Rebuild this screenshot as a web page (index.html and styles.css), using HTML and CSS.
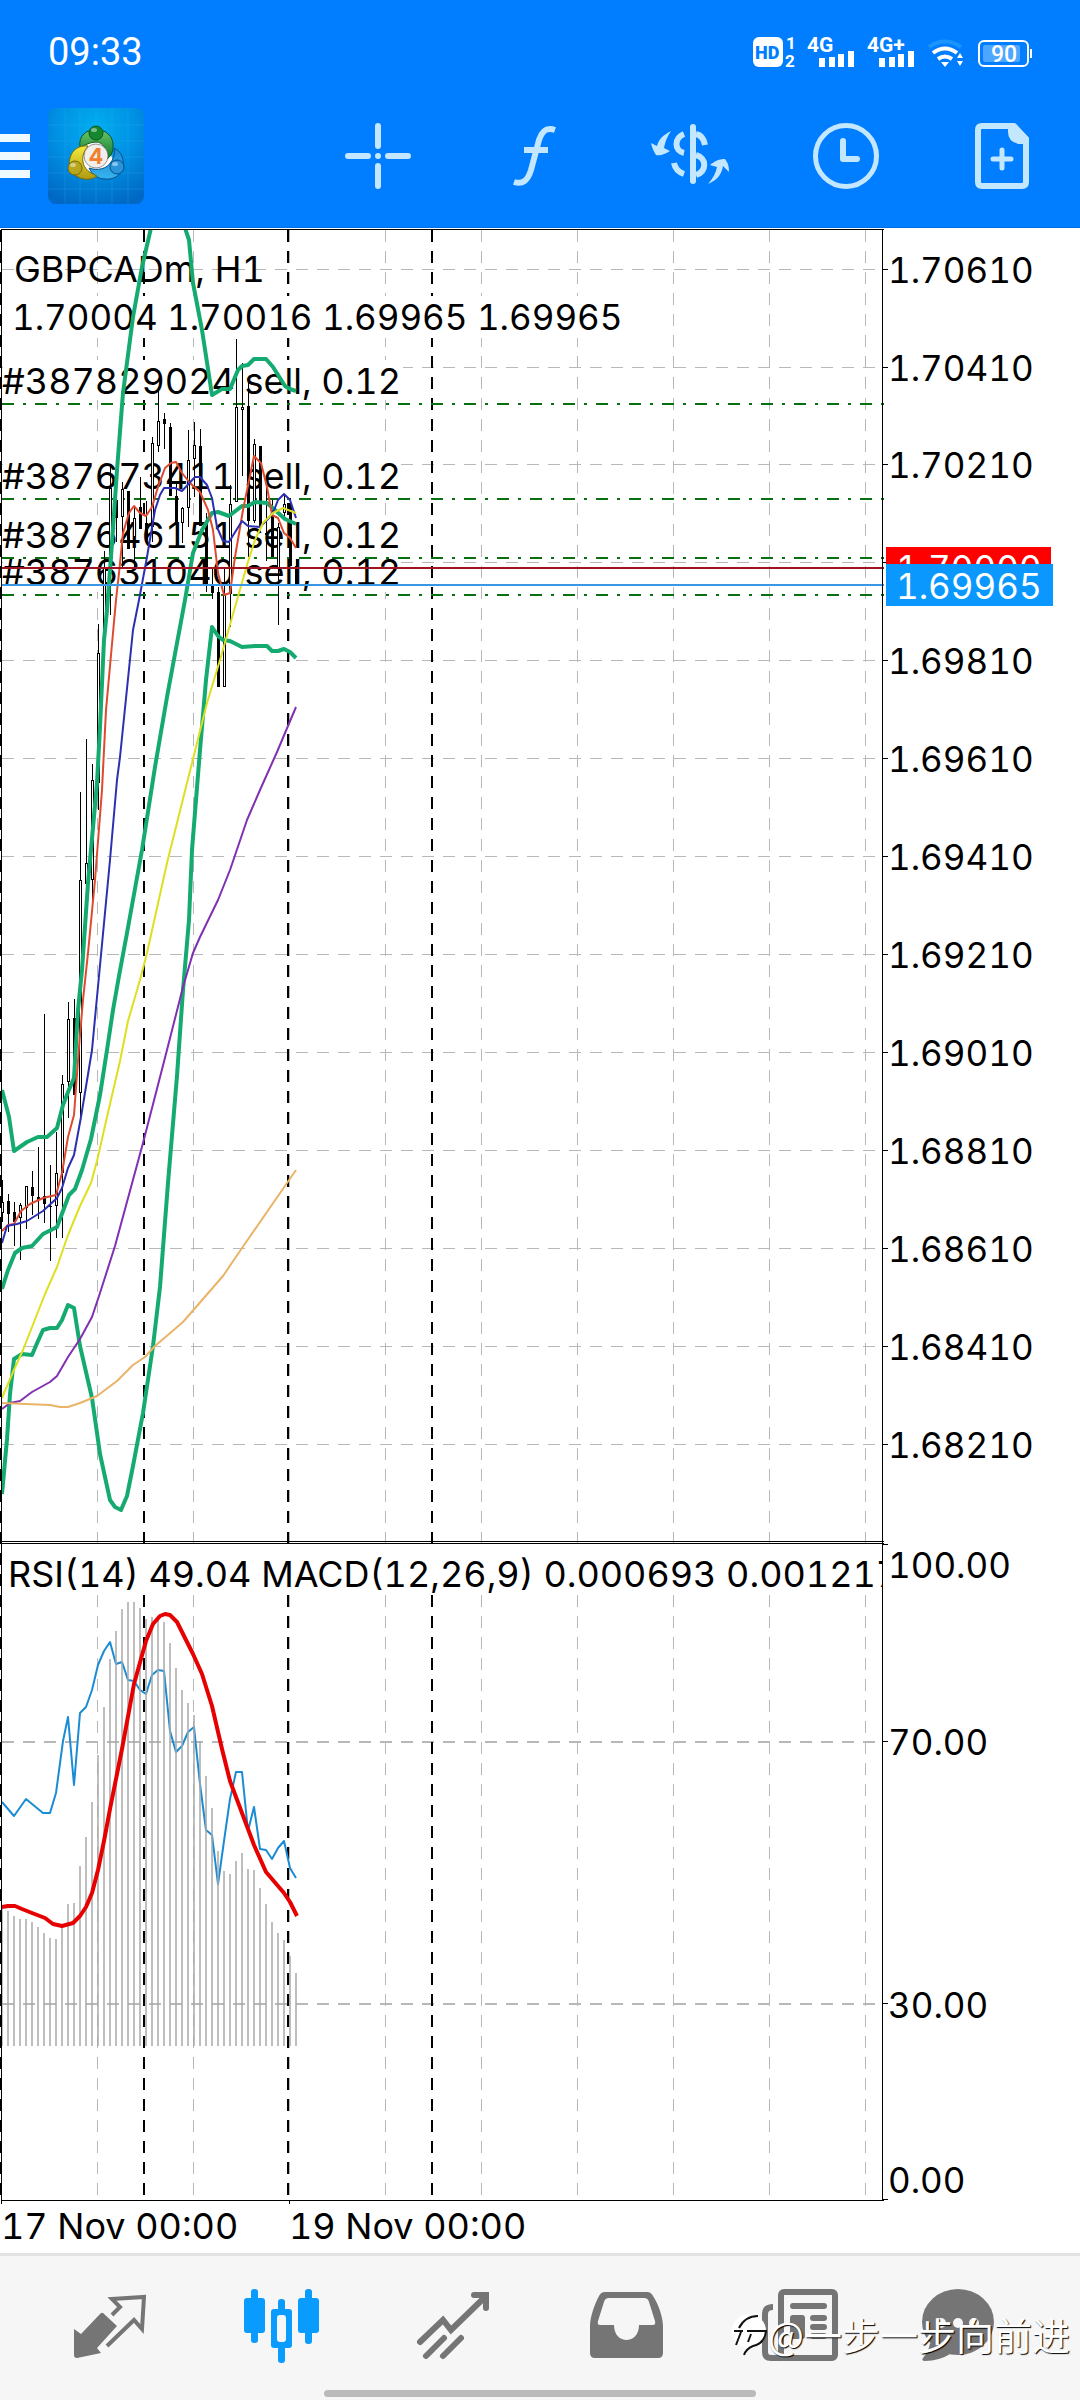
FILE: index.html
```html
<!DOCTYPE html>
<html lang="en">
<head>
<meta charset="utf-8">
<meta name="viewport" content="width=device-width, initial-scale=1">
<title>GBPCADm, H1</title>
<link rel="stylesheet" href="styles.css">
</head>
<body>
<header class="header">
  <div class="status">
    <span class="status-time">09:33</span>
    <div class="status-icons">
      <svg width="282" height="36" viewBox="750 33 282 36" aria-hidden="true">
        <rect x="753" y="36" width="30" height="30" rx="6" fill="#fff"/>
        <text x="755" y="58" class="st-hd">HD</text>
        <text x="786" y="48" class="st-tiny">1</text>
        <text x="785" y="66" class="st-tiny">2</text>
        <text x="807" y="51" class="st-net">4G</text>
        <path fill="#fff" d="M819 57h6v9h-6zM829 56h6v10h-6zM838 53h6v13h-6zM848 50h6v16h-6z"/>
        <text x="867" y="51" class="st-net">4G+</text>
        <path fill="#fff" d="M879 57h6v9h-6zM889 56h6v10h-6zM898 53h6v13h-6zM908 50h6v16h-6z"/>
        <g fill="none" stroke="#fff" stroke-width="4">
          <path stroke="#1a95ff" d="M929 46q16-11 32 0"/>
          <path d="M933 52q12-9 24 0"/>
          <path d="M938 58q7-5 14 0"/>
        </g>
        <path fill="#fff" d="M941 61h8l-4 5zM957 57l3-5 3 5zM957 60h6l-3 5z"/>
        <rect x="979" y="40" width="49" height="25" rx="5" fill="none" stroke="#fff" stroke-width="2"/>
        <rect x="983" y="44" width="37" height="17" rx="2" fill="#4da6ff"/>
        <path fill="#fff" d="M1030 48h2v9h-2z"/>
        <text x="991" y="61" class="st-bat">90</text>
      </svg>
    </div>
  </div>
  <div class="toolbar">
    <button class="menu" aria-label="Menu"><span></span><span></span><span></span></button>
    <svg class="logo" width="96" height="96" viewBox="0 0 96 96" role="img" aria-label="MetaTrader 4">
      <defs>
        <radialGradient id="lg" cx=".5" cy=".2" r=".85"><stop offset="0" stop-color="#00aeef"/><stop offset=".5" stop-color="#0090e4"/><stop offset="1" stop-color="#0068c4"/></radialGradient>
        <linearGradient id="gg" x2="0" y2="1"><stop offset="0" stop-color="#6cc46a"/><stop offset="1" stop-color="#0b7a2c"/></linearGradient>
        <linearGradient id="yg" x2="0" y2="1"><stop offset="0" stop-color="#f4ea3c"/><stop offset="1" stop-color="#b09a10"/></linearGradient>
        <linearGradient id="bg" x2="0" y2="1"><stop offset="0" stop-color="#1a86d0"/><stop offset="1" stop-color="#36b4ee"/></linearGradient>
      </defs>
      <rect width="96" height="96" rx="8" fill="url(#lg)"/>
      <path stroke="#3cb4f0" stroke-opacity=".25" d="M17 0v96M32 0v96M48 0v96M64 0v96M80 0v96M0 17h96M0 33h96M0 49h96M0 65h96M0 81h96"/>
      <path fill="#fff" d="M38 34h20l10 26-20 6-20-6z"/>
      <g stroke-width="1">
        <path fill="url(#gg)" stroke="#075a1e" d="M32 39C30 28 39 21 48 22c9-1 18 6 17 17 0 6-3 10-6 12 0-10-4-17-11-17-6 0-10 3-16 5z"/>
        <path fill="url(#bg)" stroke="#064f8c" d="M66 40c8 4 10 11 9 19-2 9-10 13-18 12-8 0-13-5-16-11 8 3 18 1 22-6 3-4 4-8 3-14z"/>
        <path fill="url(#yg)" stroke="#7a6a05" d="M40 38c-9-1-16 4-18 12-3 9 4 20 14 21 6 1 10-1 13-3-7-3-13-7-14-14-1-6 1-11 5-16z"/>
        <circle cx="48" cy="25" r="7" fill="#16862f" stroke="#075a1e"/>
        <circle cx="27" cy="60" r="7" fill="#b8a61c" stroke="#7a6a05"/>
        <circle cx="69" cy="59" r="7" fill="#2a94d8" stroke="#064f8c"/>
      </g>
      <g fill="#fff" fill-opacity=".45"><ellipse cx="46" cy="22" rx="3" ry="2"/><ellipse cx="25" cy="57" rx="3" ry="2"/><ellipse cx="67" cy="56" rx="3" ry="2"/></g>
      <circle cx="48" cy="48" r="12" fill="#f1eeec" stroke="#555" stroke-width=".6"/>
      <text x="48" y="56" class="logo-num">4</text>
    </svg>
    <nav class="tools">
      <button aria-label="Crosshair"><svg width="84" height="84" viewBox="336 114 84 84"><g stroke="#c3e7ff" stroke-width="6" stroke-linecap="round"><path d="M378 126v20M378 166v20M348 156h20M388 156h20"/></g><circle cx="378" cy="156" r="3" fill="#c3e7ff"/></svg></button>
      <button aria-label="Indicators"><svg width="84" height="84" viewBox="492 114 84 84"><path fill="none" stroke="#c3e7ff" stroke-width="6" d="M514 182c9 3 14-2 17-12l8-30c3-9 7-13 16-10M524 150h24"/></svg></button>
      <button aria-label="Trade"><svg width="84" height="84" viewBox="648 114 84 84"><g fill="none" stroke="#c3e7ff" stroke-width="6"><path stroke-linecap="round" d="M693 127v54"/><path d="M684 134c-10 4-10 17 0 19M674 163c1 5 4 9 10 11M696 134c5 1 8 5 9 11M696 155c11 3 11 16 0 20"/></g><path fill="#c3e7ff" d="M671 131c-9 5-12 8-14 15l-6-3c1 5 3 9 5 12 5 1 9-1 14-4l-6-3c1-6 3-11 7-17zM708 184c10-4 14-11 15-18l6 6c0-6-1-9-4-13-6 0-10 2-15 6l7 2c-1 6-4 11-9 17z"/></svg></button>
      <button aria-label="Timeframe"><svg width="84" height="84" viewBox="804 114 84 84"><g fill="none" stroke="#c3e7ff"><circle cx="846" cy="156" r="30.500" stroke-width="5"/><path stroke-width="6" stroke-linecap="round" stroke-linejoin="round" d="M843 141v18h14"/></g></svg></button>
      <button aria-label="New order"><svg width="84" height="84" viewBox="960 114 84 84"><path fill="none" stroke="#c3e7ff" stroke-width="6" stroke-linejoin="round" d="M982 126h32l12 13v43q0 4-4 4h-40q-4 0-4-4v-52q0-4 4-4z"/><path fill="#c3e7ff" d="M1008 124h7l14 14v6h-10q-11-2-11-12z"/><path stroke="#c3e7ff" stroke-width="5" stroke-linecap="round" d="M1002 150v18M993 159h18"/></svg></button>
    </nav>
  </div>
</header>

<main class="chart">
<svg class="plot" viewBox="0 228 1080 2025" role="img" aria-label="GBPCADm hourly price chart with RSI and MACD">
  <defs>
    <clipPath id="panes"><path d="M1 229h881v1972H1z"/></clipPath>
  </defs>

  <g class="grid">
    <path class="gv" d="M97.500 230V2200M193.500 230V2200M289.500 230V2200M385.500 230V2200M481.500 230V2200M577.500 230V2200M673.500 230V2200M769.500 230V2200M865.500 230V2200"/>
    <path class="gv" d="M2 269.500H882M2 367.500H882M2 464.500H882M2 562.500H882M2 660.500H882M2 758.500H882M2 856.500H882M2 954.500H882M2 1052.500H882M2 1150.500H882M2 1248.500H882M2 1346.500H882M2 1444.500H882"/>
    <path class="gl" d="M2 1742H882M2 2004H882"/>
    <path class="day" d="M0 230V2200M144 230V2200M288 230V2200M432 230V2200"/>
  </g>

  <g fill="#fff">
    <path d="M3 296h616v42H3zM3 360h400v40H3zM3 455h390v40H3zM3 515h392v40H3zM3 551h396v41H3zM3 1545h878v45H3z"/>
  </g>
  <g class="label">
    <text x="14" y="282">GBPCADm, H1</text>
    <text x="12" y="330" class="price">1.70004 1.70016 1.69965 1.69965</text>
    <text x="2" y="394">#387829024 sell, 0.12</text>
    <text x="2" y="489">#387673411 sell, 0.12</text>
    <text x="2" y="548">#387646151 sell, 0.12</text>
    <text x="2" y="585">#387631040 sell, 0.12</text>
    <text x="8" y="1587" clip-path="url(#panes)">RSI(14) 49.04 MACD(12,26,9) 0.000693 0.001217</text>
  </g>

  <path class="order" d="M2 404H884M2 499H884M2 558H884M2 595H884"/>

  <g class="candles">
    <path class="wick" d="M2.500 1180V1222M8.500 1194V1232M14.500 1202V1246M20.500 1203V1260M26.500 1186V1229M32.500 1171V1215M38.500 1147V1219M44.500 1014V1223M50.500 1165V1261M56.500 1132V1238M62.500 1075V1238M68.500 1002V1118M74.500 999V1095M80.500 792V1116M86.500 739V905M92.500 764V901M98.500 624V810M104.500 551V638M110.500 464V615M116.500 483V542M122.500 482V568M134.500 508V568M140.500 477V529M146.500 501V540M152.500 437V542M158.500 387V452M164.500 413V449M170.500 423V496M176.500 483V536M182.500 507V543M188.500 430V527M194.500 422V497M200.500 429V526M206.500 513V592M212.500 567V599M218.500 587V687M224.500 567V687M230.500 485V627M236.500 339V502M242.500 363V476M248.500 377V557M254.500 439V523M266.500 483V561M272.500 500V557M278.500 523V625M284.500 495V517M290.500 498V566M296.500 559V586"/>
    <path class="up" d="M1.500 1202.500h2v10h-2zM19.500 1205.500h2v12h-2zM25.500 1186.500h2v21h-2zM55.500 1173.500h2v32h-2zM61.500 1084.500h2v88h-2zM67.500 1019.500h2v62h-2zM79.500 880.500h2v212h-2zM85.500 863.500h2v20h-2zM91.500 780.500h2v99h-2zM97.500 653.500h2v129h-2zM103.500 567.500h2v69h-2zM109.500 488.500h2v78h-2zM121.500 489.500h2v27h-2zM133.500 518.500h2v18h-2zM151.500 443.500h2v83h-2zM157.500 421.500h2v24h-2zM181.500 508.500h2v14h-2zM187.500 460.500h2v47h-2zM193.500 445.500h2v13h-2zM223.500 595.500h2v91h-2zM229.500 504.500h2v89h-2zM235.500 407.500h2v94h-2zM241.500 407.500h2v2h-2zM253.500 444.500h2v76h-2zM277.500 527.500h2v40h-2zM283.500 504.500h2v8h-2z"/>
    <path class="down" d="M7 1201h3v13h-3zM13 1212h3v10h-3zM31 1187h3v9h-3zM37 1197h3v3h-3zM43 1196h3v8h-3zM49 1206h3v1h-3zM73 1018h3v77h-3zM115 500h3v18h-3zM127 491h3v58h-3zM139 507h3v22h-3zM145 523h3v17h-3zM163 419h3v5h-3zM169 427h3v69h-3zM175 496h3v28h-3zM199 446h3v80h-3zM205 523h3v63h-3zM211 586h3v7h-3zM217 592h3v95h-3zM247 406h3v115h-3zM259 446h3v81h-3zM265 533h3v2h-3zM271 516h3v41h-3zM289 503h3v63h-3zM295 566h3v19h-3z"/>
  </g>

  <g class="curves" clip-path="url(#panes)">
    <g class="band">
      <polyline points="2,1090 9,1117 14,1151 27,1142 38,1137 47,1137 57,1128 63,1105 68,1092 74,1078 78,1010 82,970 88,883 97,783 100,727 104,640 107,610 112,543 117,470 123,393 133,317 142,267 151,228"/>
      <polyline points="185,228 189,240 193,283 202,330 212,395 222,389 230,389 238,370 242,366 248,365 254,359 266,359 273,367 285,386 290,389 296,391"/>
      <polyline points="2,1289 8,1270 15,1253 22,1248 32,1246 43,1234 57,1227 63,1211 69,1195 75,1189 82,1170 91,1139 100,1095 107,1050 113,1010 119,976 127,933 142,850 155,767 167,697 185,600 193,553 202,530 212,513 218,512 229,516 242,506 248,506 255,502 267,503 285,519 296,524"/>
      <polyline points="2,1494 7,1439 10,1394 14,1359 22,1354 32,1355 38,1341 43,1330 50,1328 57,1328 62,1320 68,1305 74,1308 80,1346 92,1398 100,1454 110,1500 115,1507 121,1510 127,1496 133,1466 143,1413 153,1346 160,1287 168,1183 177,1076 183,990 189,920 192,850 200,750 206,680 212,627 218,636 223,640 230,641 242,647 255,646 267,646 272,651 278,651 284,649 290,652 296,658"/>
    </g>
    <polyline stroke="#de4a30" points="2,1231 8,1225 14,1224 21,1211 30,1204 43,1198 56,1195 62,1173 68,1137 74,1115 79,1047 83,1000 88,953 95,880 102,790 106,710 116,600 119,573 123,533 129,513 134,506 140,513 146,516 152,507 158,487 165,468 171,463 176,462 182,473 190,483 200,492 208,510 213,530 218,573 224,595 230,593 235,557 243,510 254,456 261,463 267,487 272,515 278,518 284,533 290,538 296,548"/>
    <polyline stroke="#2c30b0" points="2,1243 7,1226 17,1224 27,1221 43,1211 57,1198 62,1188 68,1168 74,1155 81,1117 92,1050 97,997 110,860 117,780 120,757 133,630 139,600 147,557 155,510 160,495 164,488 175,488 182,491 195,477 200,477 207,485 212,498 217,527 223,541 229,542 242,521 248,526 260,527 267,520 273,513 278,500 284,494 290,500 296,518"/>
    <polyline stroke="#dde020" points="2,1398 13,1372 23,1350 45,1294 57,1267 68,1235 80,1206 91,1183 97,1161 107,1117 120,1061 128,1021 140,980 147,953 167,863 187,783 207,703 220,660 237,600 247,565 255,540 263,523 273,513 283,508 296,513"/>
    <polyline stroke="#8030b0" points="2,1409 10,1403 20,1401 32,1392 50,1382 57,1376 68,1357 80,1339 92,1317 100,1293 115,1246 143,1143 167,1050 183,987 193,953 200,937 218,900 230,870 247,820 260,790 277,752 296,707"/>
    <polyline stroke="#eab468" points="2,1403 50,1405 60,1407 68,1407 80,1403 97,1396 117,1381 133,1365 145,1357 155,1346 183,1322 223,1276 242,1248 296,1170"/>

    <polyline stroke="#1a8cd4" points="2,1802 14,1816 26,1799 43,1813 50,1813 56,1793 63,1741 68,1717 74,1785 80,1713 86,1707 92,1690 98,1665 104,1651 110,1642 116,1664 122,1662 128,1680 134,1681 140,1690 146,1694 152,1675 158,1670 164,1671 170,1731 176,1752 182,1746 188,1732 194,1727 200,1784 206,1830 212,1835 218,1884 224,1841 230,1799 236,1772 242,1772 248,1831 254,1807 260,1849 266,1850 272,1859 278,1848 284,1841 290,1868 296,1878"/>
    <path class="hist" d="M2 1908V2046M8 1911V2046M14 1916V2046M20 1919V2046M26 1919V2046M32 1922V2046M38 1927V2046M44 1933V2046M50 1938V2046M56 1939V2046M62 1927V2046M68 1904V2046M74 1903V2046M80 1866V2046M86 1837V2046M92 1802V2046M98 1755V2046M104 1707V2046M110 1659V2046M116 1631V2046M122 1609V2046M128 1602V2046M134 1602V2046M140 1608V2046M146 1619V2046M152 1617V2046M158 1617V2046M164 1622V2046M170 1643V2046M176 1668V2046M182 1690V2046M188 1703V2046M194 1715V2046M200 1741V2046M206 1776V2046M212 1808V2046M218 1851V2046M224 1871V2046M230 1874V2046M236 1861V2046M242 1853V2046M248 1869V2046M254 1870V2046M260 1888V2046M266 1904V2046M272 1922V2046M278 1933V2046M284 1940V2046M290 1956V2046M296 1973V2046"/>
    <polyline class="signal" points="2,1907 8,1906 15,1906 22,1909 32,1913 45,1918 53,1924 62,1926 73,1923 80,1916 86,1907 92,1893 98,1870 104,1841 110,1809 122,1749 134,1684 146,1641 153,1624 160,1616 165,1614 170,1615 177,1622 193,1654 202,1674 212,1706 222,1749 230,1781 242,1813 254,1845 266,1872 284,1893 290,1902 297,1916"/>
  </g>

  <path stroke="#a01420" stroke-width="2" d="M1 568H884"/>
  <path stroke="#3c96e6" stroke-width="2" d="M1 585H884"/>

  <path class="frame" d="M2 229.500H884M882.500 229V2201M1.500 229V2204M2 1541.500H884M2 1543.500H884M1 2200.500H884M289.500 2200V2204M883 269.500h5M883 367.500h5M883 464.500h5M883 562.500h5M883 660.500h5M883 758.500h5M883 856.500h5M883 954.500h5M883 1052.500h5M883 1150.500h5M883 1248.500h5M883 1346.500h5M883 1444.500h5M883 1544.500h5M883 1741.500h5M883 2003.500h5M883 2199.500h5"/>

  <g class="label price">
    <text x="888" y="283">1.70610</text>
    <text x="888" y="381">1.70410</text>
    <text x="888" y="478">1.70210</text>
    <text x="888" y="674">1.69810</text>
    <text x="888" y="772">1.69610</text>
    <text x="888" y="870">1.69410</text>
    <text x="888" y="968">1.69210</text>
    <text x="888" y="1066">1.69010</text>
    <text x="888" y="1164">1.68810</text>
    <text x="888" y="1262">1.68610</text>
    <text x="888" y="1360">1.68410</text>
    <text x="888" y="1458">1.68210</text>
    <text x="888" y="1578">100.00</text>
    <text x="888" y="1755">70.00</text>
    <text x="888" y="2018">30.00</text>
    <text x="888" y="2193">0.00</text>
  </g>
  <g class="label">
    <text x="1" y="2239">17 Nov 00:00</text>
    <text x="289" y="2239">19 Nov 00:00</text>
  </g>
  <g class="label price tag">
    <path fill="#f00" d="M886 547h165v42H886z"/>
    <text x="896" y="581">1.70000</text>
    <path fill="#0a98ff" d="M886 564h167v42H886z"/>
    <text x="896" y="599">1.69965</text>
  </g>
</svg>
</main>

<footer class="footer">
  <nav class="tabs">
    <button aria-label="Quotes"><svg width="84" height="84" viewBox="0 0 84 84"><path fill="#757575" d="M35 30L49 43 29 65 33 70 9 75Q6 75 6 72V46L13 51 32 31Q34 29 35 30z"/><path fill="none" stroke="#757575" stroke-width="4" d="M44 32l8-8-8-8 32-2-2 32-8-9L39 63"/></svg></button>
    <button aria-label="Chart"><svg width="84" height="84" viewBox="0 0 84 84" fill="#0a9bff"><rect x="4" y="15" width="21" height="35" rx="3"/><rect x="11" y="6" width="7" height="54" rx="3"/><rect x="58" y="15" width="21" height="35" rx="3"/><rect x="65" y="6" width="7" height="55" rx="3"/><rect x="38" y="16" width="7" height="64" rx="3"/><rect x="31" y="26" width="21" height="39" rx="3"/><rect x="37" y="32" width="9" height="27" rx="3" fill="#f6f6f6"/></svg></button>
    <button aria-label="Trade"><svg width="84" height="84" viewBox="0 0 84 84"><path fill="none" stroke="#757575" stroke-width="6" d="M8 59L31 37l8 10L74 13M62 12h12v13M14 73l18-18M31 73l18-18" stroke-linecap="round"/></svg></button>
    <button aria-label="History"><svg width="84" height="84" viewBox="0 0 84 84"><path fill="#757575" fill-rule="evenodd" d="M6 43C6 34 11 20 15 13Q17 9 21 9H63Q67 9 69 13C74 20 79 34 79 43V70Q79 75 74 75H11Q6 75 6 70zM16 42H30C30 62 55 62 55 42H69Q72 42 71 38L65 19Q64 15 60 15H25Q21 15 20 19L14 38Q13 42 16 42z"/></svg></button>
    <button aria-label="News"><svg width="84" height="84" viewBox="0 0 84 84"><g fill="none" stroke="#757575" stroke-width="6"><path d="M17 24q-8 0-8 7v38q0 6 6 6h12"/><rect x="25" y="9" width="54" height="66" rx="3"/><path stroke-linecap="round" d="M37 23h31M57 35h11M57 44h11M57 53h11"/></g><rect x="34" y="32" width="15" height="24" rx="3" fill="#757575"/></svg></button>
    <button aria-label="Messages"><svg width="84" height="84" viewBox="0 0 84 84"><ellipse cx="30" cy="39" rx="36" ry="33" fill="#757575"/><path fill="#757575" d="M2 60q-1 8-7 15-2 3 2 3 14 0 27-8z"/><g fill="#f6f6f6"><circle cx="13" cy="40" r="5"/><circle cx="30" cy="40" r="5"/><circle cx="46" cy="40" r="5"/></g></svg></button>
  </nav>
  <div class="home-bar"></div>
  <div class="watermark">
    <svg width="38" height="44" viewBox="0 0 38 44" aria-hidden="true"><circle cx="19" cy="19" r="17" fill="#fff"/><path fill="none" stroke="#111" stroke-width="2" d="M6 33l5-13M9 16q6-12 19-12M4 19h9M17 19h19q-1 12-13 15-7 3-9 9M21 22l-3 8"/></svg>
    <span>@一步一步向前进</span>
  </div>
</footer>
</body>
</html>
```
FILE: styles.css
```css
* {
  box-sizing: border-box;
}

body {
  margin: 0;
  min-height: 100vh;
  display: flex;
  flex-direction: column;
  background: #fff;
  font-family: Inter, "Liberation Sans", sans-serif;
}

button {
  margin: 0;
  padding: 0;
  border: 0;
  background: none;
  display: flex;
  align-items: center;
  justify-content: center;
}

.header {
  background: #007eff;
  border-bottom: 1px solid #0070e0;
}

.status {
  display: flex;
  align-items: center;
  justify-content: space-between;
  padding: 28px 48px 20px;
}

.status-time {
  font: 38px/48px Roboto, sans-serif;
  color: #fff;
}

.status-icons {
  display: flex;
}

.status-icons text {
  fill: #fff;
  font-family: Roboto, sans-serif;
}

.status-icons .st-hd {
  fill: #007eff;
  font-size: 18px;
  font-weight: 900;
}

.st-tiny {
  font-size: 17px;
  font-weight: 700;
}

.st-net {
  font-size: 21px;
  font-weight: 700;
}

.st-bat {
  font-size: 23px;
  font-weight: 500;
}

.toolbar {
  display: flex;
  align-items: center;
  padding: 12px 0 23px;
}

.menu {
  width: 30px;
  flex-direction: column;
  gap: 10px;
  margin-right: 18px;
}

.menu span {
  width: 100%;
  height: 8px;
  background: #eefaff;
}

.logo-num {
  font: 700 22px Inter, sans-serif;
  fill: #f08030;
  text-anchor: middle;
}

.tools {
  flex: 1;
  display: flex;
  margin-left: 156px;
}

.tools button {
  flex: 1;
}

.plot {
  display: block;
  width: 100%;
  height: auto;
}

.grid {
  fill: none;
  stroke-dasharray: 12 9;
  shape-rendering: crispEdges;
}

.gv {
  stroke: #b8b8b8;
  stroke-width: 1;
}

.gl {
  stroke: #b8b8b8;
  stroke-width: 2;
}

.day {
  stroke: #000;
  stroke-width: 2;
}

.label {
  font-family: Inter, "Liberation Sans", sans-serif;
  font-size: 36px;
  font-optical-sizing: none;
  font-variant-numeric: tabular-nums;
  fill: #000;
}

.price {
  font-size: 35px;
}

.tag text {
  fill: #fff;
}

.order {
  stroke: #087010;
  stroke-width: 2;
  stroke-dasharray: 12 9 3 9;
}

.candles {
  stroke: #000;
  shape-rendering: crispEdges;
}

.up {
  fill: #fff;
}

.down {
  fill: #000;
  stroke: none;
}

.curves {
  fill: none;
  stroke-width: 2px;
  stroke-linejoin: round;
}

.band {
  stroke: #14aa70;
  stroke-width: 4px;
}

.hist {
  stroke: #a8a8a8;
  stroke-opacity: .75;
  stroke-width: 2px;
  shape-rendering: crispEdges;
}

.signal {
  stroke: #e60000;
  stroke-width: 4px;
}

.frame {
  fill: none;
  stroke: #000;
  shape-rendering: crispEdges;
}

.footer {
  position: relative;
  flex: 1;
  display: flex;
  flex-direction: column;
  align-items: center;
  justify-content: space-between;
  background: #f6f6f6;
  border-top: 3px solid #e3e3e3;
  padding-bottom: 3px;
}

.tabs {
  width: 100%;
  display: flex;
  padding: 27px 24px 0;
}

.tabs button {
  flex: 1;
}

.tabs svg {
  overflow: visible;
}

.home-bar {
  width: 40%;
  height: 7px;
  border-radius: 4px;
  background: #bababa;
}

.watermark {
  position: absolute;
  right: 10px;
  bottom: 42px;
  display: flex;
  align-items: center;
  color: #fff;
  font: 38px/48px "Noto Sans CJK SC", sans-serif;
  text-shadow: 1px 1px 1px #000;
}
```
